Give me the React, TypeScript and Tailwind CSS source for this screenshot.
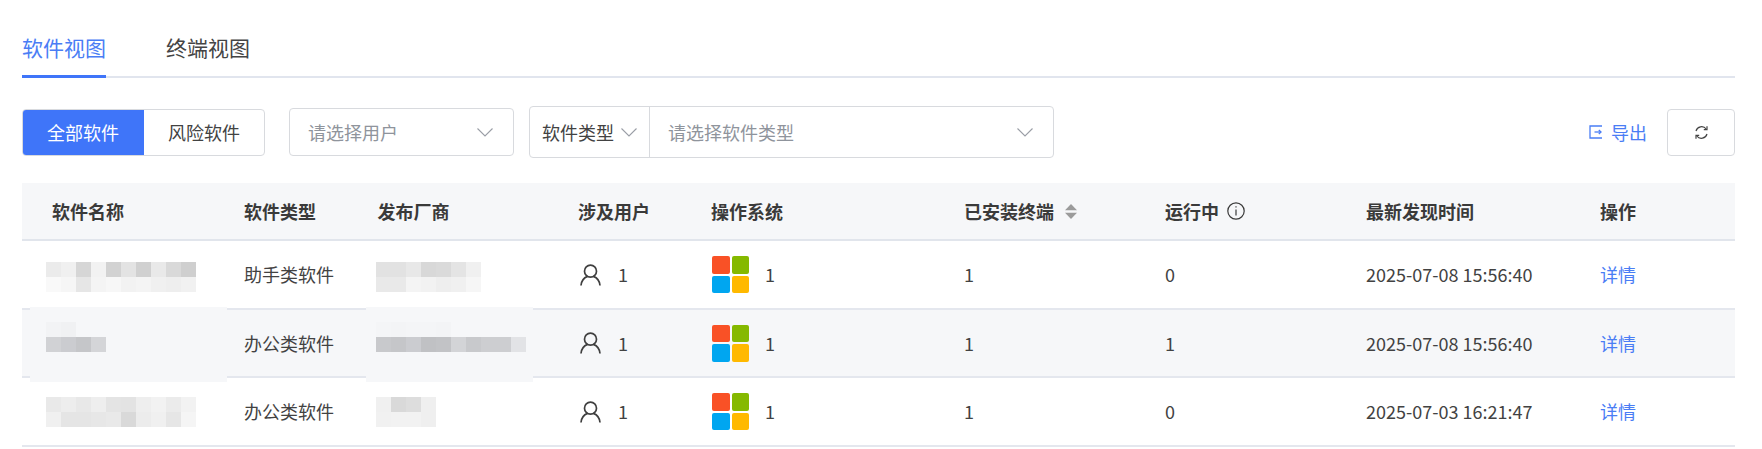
import React from "react";

const GRID = "grid grid-cols-[222px_133.5px_200.5px_133px_253px_201px_201px_234px_135px] items-center";

function Mosaic({ cells }: { cells: string[][] }) {
  return (
    <div className="flex flex-col">
      {cells.map((row, i) => (
        <div key={i} className="flex">
          {row.map((c, j) => (
            <div key={j} className="h-[15px] w-[15px]" style={{ backgroundColor: c }} />
          ))}
        </div>
      ))}
    </div>
  );
}

function Chevron({ className }: { className: string }) {
  return (
    <svg className={className} viewBox="0 0 16 9" fill="none" stroke="#9a9ea6" strokeWidth="1.1">
      <path d="M0.5 0.5 L8 8 L15.5 0.5" />
    </svg>
  );
}

function UserIcon() {
  return (
    <svg className="h-[22px] w-[21px]" viewBox="0 0 21 22" fill="none" stroke="#3f3f3f" strokeWidth="1.7">
      <circle cx="10.5" cy="7.2" r="6" />
      <path d="M1 21.5 C1.5 16 5 13.4 7.5 12.4 M20 21.5 C19.5 16 16 13.4 13.5 12.4" />
    </svg>
  );
}

function WinLogo() {
  return (
    <div className="grid h-[37px] w-[37px] grid-cols-[17.5px_17.5px] grid-rows-[17.5px_17.5px] gap-[2px]">
      <div className="rounded-[2px] bg-[#f95126]" />
      <div className="rounded-[2px] bg-[#85b900]" />
      <div className="rounded-[2px] bg-[#00a6f0]" />
      <div className="rounded-[2px] bg-[#ffb900]" />
    </div>
  );
}

type Row = {
  type: string;
  running: string;
  time: string;
  name: string[][];
  vendor: string[][];
  patch?: boolean;
  shift: string;
};

const rows: Row[] = [
  {
    type: "助手类软件",
    running: "0",
    time: "2025-07-08 15:56:40",
    shift: "pt-[4px]",
    name: [
      ["#ebebeb", "#f0f0f0", "#d6d6d6", "#f2f2f2", "#d2d2d2", "#e3e3e3", "#d0d0d0", "#e9e9e9", "#d9d9d9", "#cfcfcf"],
      ["#f9f9f9", "#f6f6f6", "#e6e6e6", "#f4f4f4", "#f7f7f7", "#f2f2f2", "#f4f4f4", "#f0f0f0", "#eeeeee", "#f1f1f1"],
    ],
    vendor: [
      ["#e2e2e2", "#e2e2e2", "#e8e8e8", "#d8d8d8", "#dadada", "#e4e4e4", "#f0f0f0"],
      ["#e9e9e9", "#e9e9e9", "#f4f4f4", "#f2f2f2", "#eeeeee", "#f0f0f0", "#f6f6f6"],
    ],
  },
  {
    type: "办公类软件",
    running: "1",
    time: "2025-07-08 15:56:40",
    patch: true,
    shift: "pb-[12px]",
    name: [
      ["#f2f3f5", "#f0f1f3", "#f6f7f9", "#f6f7f9", "#f6f7f9", "#f6f7f9", "#f6f7f9", "#f6f7f9", "#f6f7f9", "#f6f7f9"],
      ["#d1d2d5", "#cbccd0", "#c5c6c9", "#d4d5d8"],
    ],
    vendor: [
      ["#f4f5f7", "#f3f4f6", "#f4f5f7", "#f4f5f7", "#f3f4f6", "#f6f7f9", "#f6f7f9", "#f6f7f9", "#f6f7f9", "#f6f7f9"],
      ["#c8c9cc", "#c5c6c9", "#cbccd0", "#c0c1c4", "#c2c3c6", "#d3d4d7", "#c8c9cc", "#cdced1", "#cdced1", "#e2e3e6"],
    ],
  },
  {
    type: "办公类软件",
    running: "0",
    time: "2025-07-03 16:21:47",
    shift: "pt-[1px]",
    name: [
      ["#e9e9e9", "#ededed", "#e8e8e8", "#eeeeee", "#e4e4e4", "#e3e3e3", "#eeeeee", "#f2f2f2", "#ebebeb", "#f2f2f2"],
      ["#f0f0f0", "#e5e5e5", "#e5e5e5", "#e7e7e7", "#e9e9e9", "#d9d9d9", "#ececec", "#f0f0f0", "#e6e6e6", "#f5f5f5"],
    ],
    vendor: [
      ["#f0f0f0", "#d9d9d9", "#dddddd", "#efefef"],
      ["#f1f1f1", "#f2f2f2", "#f2f2f2", "#efefef"],
    ],
  },
];

export default function App() {
  return (
    <div className="h-[449px] w-[1762px] overflow-hidden bg-white font-['Noto_Sans_CJK_SC','Noto_Sans',sans-serif] text-[18px] text-[#424242]">
      <div className="flex flex-col pl-[22px] pr-[27px]">
        {/* Tabs */}
        <div className="flex h-[78px] gap-[60px] border-b-2 border-[#e1e5ee]">
          <div className="-mb-[2px] flex h-[78px] w-[84px] items-start justify-center border-b-[3px] border-[#3f75f9] pt-[32px] text-[21px] leading-[30px] text-[#4a7df5]">
            软件视图
          </div>
          <div className="pt-[32px] text-[21px] leading-[30px] text-[#444444]">终端视图</div>
        </div>

        {/* Toolbar */}
        <div className="mt-[28px] flex h-[52px] items-center">
          <div className="flex h-[47px] w-[243px] overflow-hidden rounded-[4px] border border-[#d8dade]">
            <div className="-my-px -ml-px flex w-[122px] items-center justify-center bg-[#3f75f9] text-white">全部软件</div>
            <div className="flex flex-1 items-center justify-center">风险软件</div>
          </div>
          <div className="ml-[24px] flex h-[48px] w-[225px] items-center justify-between rounded-[4px] border border-[#d8dade] pl-[18px] pr-[20px] text-[#8f949c]">
            <span>请选择用户</span>
            <Chevron className="h-[9px] w-[16px]" />
          </div>
          <div className="ml-[15px] flex h-[52px] w-[525px] items-center rounded-[4px] border border-[#d8dade]">
            <div className="flex h-full w-[120px] items-center gap-[7px] border-r border-[#d8dade] pl-[12px]">
              <span>软件类型</span>
              <Chevron className="h-[9px] w-[16px]" />
            </div>
            <div className="flex flex-1 items-center justify-between pl-[18px] pr-[20px] text-[#8f949c]">
              <span>请选择软件类型</span>
              <Chevron className="h-[9px] w-[16px]" />
            </div>
          </div>
          <div className="ml-auto flex items-center gap-[8px] text-[#4a7df5]">
            <svg className="h-[14px] w-[14px]" viewBox="0 0 14 14" fill="none" stroke="#4a7df5" strokeWidth="1.3">
              <path d="M13 1 H1 V13 H13" />
              <path d="M5.5 7 H12" />
              <path d="M9.8 5 L12 7 L9.8 9" />
            </svg>
            <span>导出</span>
          </div>
          <div className="ml-[20px] flex h-[47px] w-[68px] items-center justify-center rounded-[4px] border border-[#d8dade]">
            <svg className="h-[15px] w-[15px]" viewBox="0 0 15 15" fill="none" stroke="#444444" strokeWidth="1.2">
              <path d="M2 6 A5.8 5.8 0 0 1 12.2 4" />
              <path d="M13 1.2 V4.6 H9.8" />
              <path d="M13 9 A5.8 5.8 0 0 1 2.8 11" />
              <path d="M2 13.8 V10.4 H5.2" />
            </svg>
          </div>
        </div>

        {/* Table */}
        <div className="mt-[25px]">
          <div className={`${GRID} h-[58px] border-b-2 border-[#e1e5ec] bg-[#f6f7f9] font-bold text-[#3a3a3a]`}>
            <div className="pl-[30px]">软件名称</div>
            <div>软件类型</div>
            <div>发布厂商</div>
            <div>涉及用户</div>
            <div>操作系统</div>
            <div className="flex items-center gap-[11px]">
              <span>已安装终端</span>
              <svg className="h-[15px] w-[12px]" viewBox="0 0 12 15" fill="#9b9b9b">
                <path d="M6 0 L12 6.3 H0 Z" />
                <path d="M6 15 L12 8.7 H0 Z" />
              </svg>
            </div>
            <div className="flex items-center gap-[8px]">
              <span>运行中</span>
              <svg className="h-[18px] w-[18px]" viewBox="0 0 18 18" fill="none" stroke="#3a3a3a" strokeWidth="1.2">
                <circle cx="9" cy="9" r="8.2" />
                <path d="M9 7.6 V13.6" />
                <path d="M9 4.2 V5.6" />
              </svg>
            </div>
            <div>最新发现时间</div>
            <div>操作</div>
          </div>

          {rows.map((r, i) => (
            <div
              key={i}
              className={`${GRID} h-[68.5px] border-b-2 border-[#e4e7ee] pt-[1px] ${r.patch ? "bg-[#f6f7f9]" : "bg-white"}`}
            >
              <div className={`relative pl-[24px] ${r.shift}`}>
                {r.patch && <div className="absolute -top-[15px] left-[8px] h-[75px] w-[197px] bg-[#f6f7f9]" />}
                <div className="relative">
                  <Mosaic cells={r.name} />
                </div>
              </div>
              <div>{r.type}</div>
              <div className={`relative -ml-[1.5px] ${r.shift}`}>
                {r.patch && <div className="absolute -top-[15px] -left-[10px] h-[75px] w-[167px] bg-[#f6f7f9]" />}
                <div className="relative">
                  <Mosaic cells={r.vendor} />
                </div>
              </div>
              <div className="flex items-center gap-[17px] pl-[2px]">
                <UserIcon />
                <span>1</span>
              </div>
              <div className="flex items-center gap-[16px] pl-[1px]">
                <WinLogo />
                <span>1</span>
              </div>
              <div>1</div>
              <div>{r.running}</div>
              <div>{r.time}</div>
              <div className="text-[#4a7df5]">详情</div>
            </div>
          ))}
        </div>
      </div>
    </div>
  );
}
